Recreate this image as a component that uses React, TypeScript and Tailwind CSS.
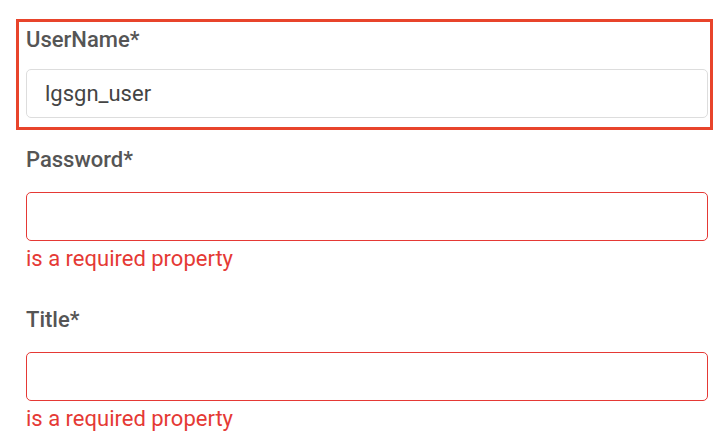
const LABEL = 'block text-[22px] leading-[26px] font-medium text-[#555555]';
const INPUT =
  'block w-full h-[49px] rounded-[5px] border bg-white px-[18px] text-[22px] text-[#444444] outline-none';
const ERROR = 'text-[22px] leading-[26px] text-[#e53935]';

export default function App() {
  return (
    <div className="min-h-screen bg-white pt-[19px]" style={{ fontFamily: 'Roboto, "Noto Sans", sans-serif' }}>
      {/* selected field */}
      <div className="ml-[16px] mr-[15px] border-[3px] border-[#e8442b] pl-[7px] pr-[2px] pt-[5px] pb-[9px]">
        <label className={LABEL}>UserName*</label>
        <input className={`${INPUT} mt-[16px] border-[#dddddd]`} defaultValue="lgsgn_user" />
      </div>

      <div className="ml-[26px] mr-[20px]">
        <div className="mt-[17px]">
          <label className={LABEL}>Password*</label>
          <input className={`${INPUT} mt-[19px] border-[#e53935]`} type="password" />
          <p className={`${ERROR} mt-[5px]`}>is a required property</p>
        </div>

        <div className="mt-[35px]">
          <label className={LABEL}>Title*</label>
          <input className={`${INPUT} mt-[19px] border-[#e53935]`} />
          <p className={`${ERROR} mt-[5px]`}>is a required property</p>
        </div>
      </div>
    </div>
  );
}
